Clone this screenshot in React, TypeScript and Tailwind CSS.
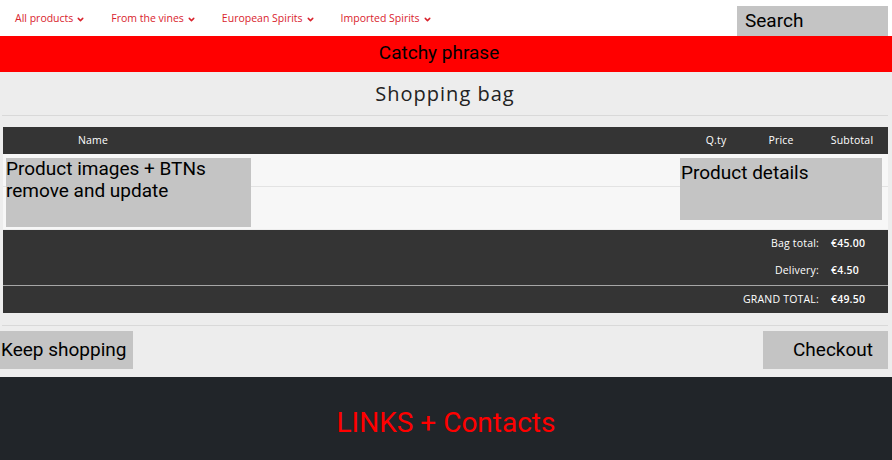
import { ChevronDown } from "lucide-react";

const navLinks = ["All products", "From the vines", "European Spirits", "Imported Spirits"];

function TotalRow({ label, value }: { label: string; value: string }) {
  return (
    <div className="flex h-[27px] items-center justify-end text-[10.5px] tracking-[0.2px] text-white">
      <span className="text-right">{label}</span>
      <span className="w-[57px] pl-[12px] font-semibold">{value}</span>
    </div>
  );
}

export default function App() {
  return (
    <div className="min-h-[460px] w-[892px] bg-[#ededed] font-['Roboto',sans-serif] text-black">
      {/* Nav */}
      <nav className="flex h-[36px] items-stretch bg-white">
        <ul className="flex items-center gap-[26px] pl-[15px] pt-[2px] font-['Open_Sans',sans-serif] text-[10.5px] text-[#d9232d]">
          {navLinks.map((l) => (
            <li key={l} className="flex items-center gap-[3px]">
              {l}
              <ChevronDown className="h-[9px] w-[9px]" strokeWidth={4} />
            </li>
          ))}
        </ul>
        <div className="ml-auto mr-[4px] mt-[6px] flex h-[30px] w-[151px] items-center bg-[#c4c4c4] pl-[8px] text-[19px]">
          Search
        </div>
      </nav>

      {/* Catchy phrase */}
      <div className="flex h-[36px] items-center justify-center bg-[#ff0000] pb-[1px] pr-[14px] text-[19px]">
        Catchy phrase
      </div>

      {/* Bag */}
      <main className="px-[2px]">
        <h1 className="mr-[2px] flex h-[44px] items-center justify-center border-b border-[#d9d9d9] font-['Open_Sans',sans-serif] text-[20px] tracking-[1px] text-[#222]">
          Shopping bag
        </h1>

        <div className="mt-[11px] mr-[2px] ml-[1px]">
          <div className="grid h-[27px] grid-cols-[180px_1fr_60px_70px_72px] items-center bg-[#343434] font-['Open_Sans',sans-serif] text-[10.5px] tracking-[0.2px] text-white">
            <span className="text-center">Name</span>
            <span />
            <span className="text-center">Q.ty</span>
            <span className="text-center">Price</span>
            <span className="text-center">Subtotal</span>
          </div>

          <div className="relative flex h-[75px] bg-[#f7f7f7]">
            <div className="absolute left-0 right-0 top-[32px] border-t border-[#e3e3e3]" />
            <div className="relative z-10 ml-[3px] mt-[4px] h-[69px] w-[245px] bg-[#c4c4c4] text-[19px] leading-[22px]">
              Product images + BTNs remove and update
            </div>
            <div className="relative z-10 ml-auto mr-[6px] mt-[4px] h-[62px] w-[202px] bg-[#c4c4c4] pl-[1px] pt-[4px] text-[19px] leading-[22px]">
              Product details
            </div>
          </div>

          <div className="mt-[1px] bg-[#343434] font-['Open_Sans',sans-serif]">
            <div className="pb-[1px] pr-[12px]">
              <TotalRow label="Bag total:" value="€45.00" />
              <TotalRow label="Delivery:" value="€4.50" />
            </div>
            <div className="border-t border-[#a6a6a6] pr-[12px]">
              <TotalRow label="GRAND TOTAL:" value="€49.50" />
            </div>
          </div>
        </div>

        <div className="mt-[12px] mr-[2px] border-t border-[#d9d9d9]" />
      </main>

      <div className="flex h-[51px] items-start pt-[5px] text-[19px]">
        <button className="flex h-[38px] w-[133px] items-center bg-[#c4c4c4] pl-[1px]">Keep shopping</button>
        <button className="ml-auto mr-[4px] flex h-[38px] w-[125px] items-center justify-end bg-[#c4c4c4] pr-[15px]">
          Checkout
        </button>
      </div>

      <footer className="flex h-[83px] items-center justify-center bg-[#212529] pt-[8px] text-[28px] text-[#ff0000]">
        LINKS + Contacts
      </footer>
    </div>
  );
}
